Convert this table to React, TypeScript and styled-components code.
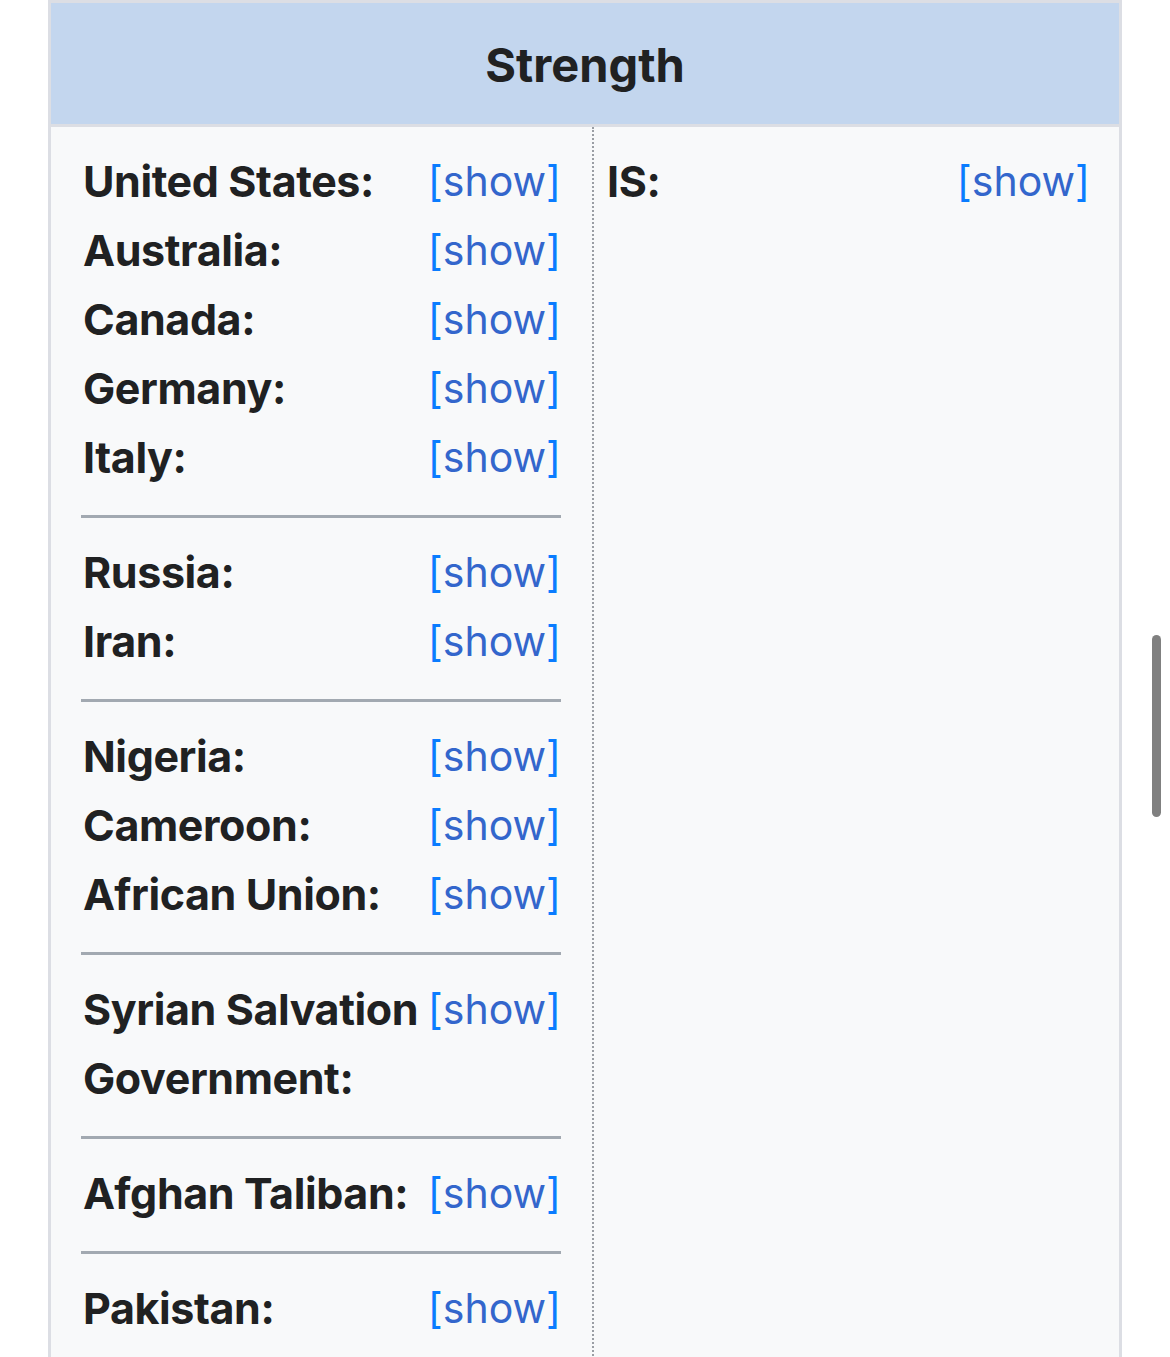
import React from "react";
import styled, { createGlobalStyle } from "styled-components";

const GlobalStyle = createGlobalStyle`
  html, body {
    margin: 0;
    padding: 0;
    background: #ffffff;
  }
  body {
    font-family: Inter, "Noto Sans", "Liberation Sans", sans-serif;
    color: #202122;
  }
`;

// each inner list is one block between rules; "\n" marks where the label wraps
const groups: string[][] = [
  ["United States:", "Australia:", "Canada:", "Germany:", "Italy:"],
  ["Russia:", "Iran:"],
  ["Nigeria:", "Cameroon:", "African Union:"],
  ["Syrian Salvation\nGovernment:"],
  ["Afghan Taliban:"],
  ["Pakistan:"],
];

export default function App() {
  return (
    <>
      <GlobalStyle />
      <Page>
        <Box>
          <Header>Strength</Header>
          <Columns>
            <LeftColumn>
              {groups.map((group, i) => (
                <React.Fragment key={i}>
                  {i > 0 && <Rule />}
                  <Group>
                    {group.map((name) => (
                      <Row key={name}>
                        <Label>{name}</Label>
                        <ShowLink />
                      </Row>
                    ))}
                  </Group>
                </React.Fragment>
              ))}
            </LeftColumn>
            <RightColumn>
              <Group>
                <Row>
                  <Label>IS:</Label>
                  <ShowLink />
                </Row>
              </Group>
            </RightColumn>
          </Columns>
        </Box>
      </Page>
      <ScrollThumb />
    </>
  );
}

function ShowLink() {
  return (
    <Show>
      <Bracket>[</Bracket>show<Bracket>]</Bracket>
    </Show>
  );
}

const Page = styled.div`
  padding: 0 48px;
  width: 1074px;
  height: 1357px;
  overflow: hidden;
`;

const Box = styled.div`
  border: 3px solid #dcdee4;
  border-bottom: none;
  background: #f8f9fa;
`;

const Header = styled.div`
  background: #c3d6ee;
  height: 124px;
  box-sizing: border-box;
  border-bottom: 3px solid #dcdee4;
  display: flex;
  align-items: center;
  justify-content: center;
  padding-top: 2px;
  font-size: 47px;
  font-weight: 700;
`;

const Columns = styled.div`
  display: grid;
  grid-template-columns: 543px 1fr;
  min-height: 1300px;
`;

const LeftColumn = styled.div`
  padding: 20px 31px 0 30px;
  border-right: 2px dotted #9a9ea4;
`;

const RightColumn = styled.div`
  padding: 20px 29px 0 11px;
`;

const Group = styled.div`
  display: flex;
  flex-direction: column;
`;

const Row = styled.div`
  display: grid;
  grid-template-columns: minmax(0, 1fr) auto;
  align-items: start;
  column-gap: 6px;
  padding-left: 2px;
`;

const Label = styled.div`
  font-size: 43px;
  font-weight: 700;
  line-height: 69px;
  letter-spacing: -0.4px;
  white-space: pre;
  color: #202122;
`;

const Show = styled.span`
  font-size: 41px;
  font-weight: 400;
  line-height: 69px;
  color: #3366cc;
  white-space: nowrap;
`;

const Bracket = styled.span`
  color: #0a7cff;
`;

const Rule = styled.hr`
  border: none;
  height: 3px;
  background: #a2a9b1;
  margin: 23px 0 20px 0;
`;

const ScrollThumb = styled.div`
  position: fixed;
  left: 1152px;
  top: 635px;
  width: 9px;
  height: 182px;
  border-radius: 5px;
  background: #808080;
`;
